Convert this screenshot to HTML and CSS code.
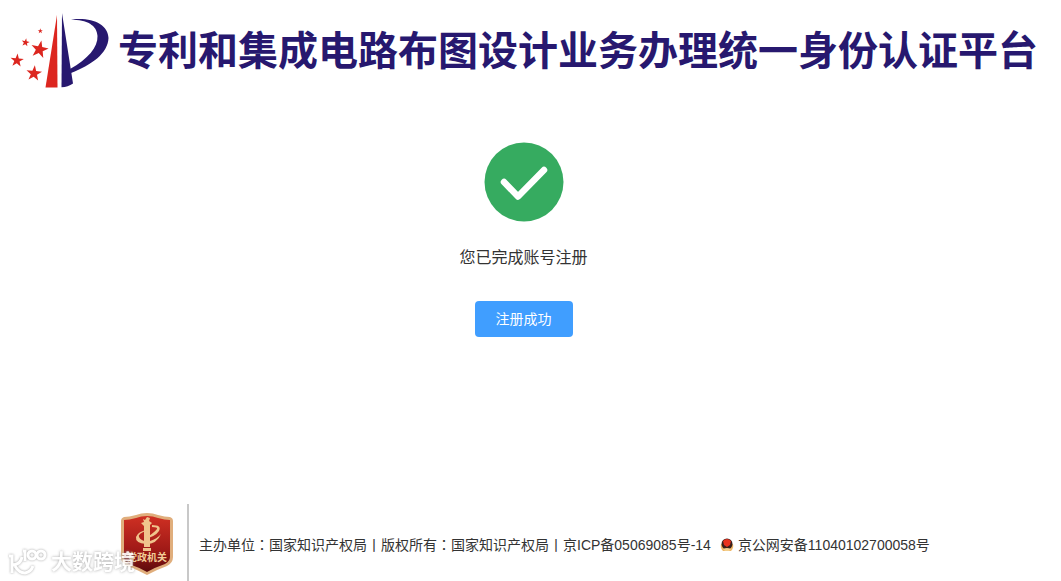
FILE: index.html
```html
<!DOCTYPE html>
<html lang="zh-CN">
<head>
  <meta charset="UTF-8" />
  <meta name="viewport" content="width=device-width, initial-scale=1" />
  <title>专利和集成电路布图设计业务办理统一身份认证平台</title>
  <link rel="stylesheet" href="styles.css">
</head>
<body>
  <header class="header">
    <svg class="logo" viewBox="0 0 100 76" aria-hidden="true">
      <defs>
        <path id="star" d="M0-10 2.3-3.2 9.5-3.1 3.8 1.2 5.9 8.1 0 4-5.9 8.1-3.8 1.2-9.5-3.1-2.3-3.2Z" />
      </defs>
      <g fill="#dc261f">
        <use href="#star" transform="translate(29.500 37.500) rotate(12) scale(.92)" />
        <use href="#star" transform="translate(7 48.500) rotate(5) scale(.7)" />
        <use href="#star" transform="translate(24 61.500) rotate(6) scale(.82)" />
        <use href="#star" transform="translate(15.500 30.500) rotate(10) scale(.42)" />
        <use href="#star" transform="translate(30.300 19) scale(.27)" />
        <path d="M47 3 47.500 75.500H35.500Z" />
      </g>
      <g fill="#27186f">
        <path d="M52 1 63 71.500Q58 75 51.500 75.300Z" />
        <path d="M61 7.500C82 5 98 12 98.500 26 98 41 82 53 61 61L60 57C78 47 88 35 87.500 24 87 13 77 8 61 7.500Z" />
      </g>
    </svg>
    <h1 class="title">专利和集成电路布图设计业务办理统一身份认证平台</h1>
  </header>

  <main class="result">
    <svg class="result-icon" viewBox="0 0 80 80" aria-hidden="true">
      <circle cx="40" cy="40" r="39.500" fill="#36ab60" />
      <path d="M20 40 34 54.500 60 28" fill="none" stroke="#fff" stroke-width="6.500" stroke-linecap="round" stroke-linejoin="round" />
    </svg>
    <p class="result-text">您已完成账号注册</p>
    <button type="button" class="btn">注册成功</button>
  </main>

  <footer class="footer">
    <svg class="badge" viewBox="0 0 54 64" role="img" aria-label="党政机关">
      <defs>
        <linearGradient id="shield" x1="0" y1="0" x2="0" y2="1">
          <stop offset="0" stop-color="#cf3023" />
          <stop offset=".6" stop-color="#a01a17" />
          <stop offset="1" stop-color="#5c0b0c" />
        </linearGradient>
      </defs>
      <path d="M27 1Q33 1 38 3 45 5 50 5 53 6 53 9V45Q53 51 47 54 36 58 27 63 18 58 7 54 1 51 1 45V9Q1 6 4 5 9 5 16 3 21 1 27 1Z" fill="#e0ae7c" />
      <path d="M27 4Q33 4 38 6 45 8 50 8V45Q50 49 45 52 36 55 27 60 18 55 9 52 4 49 4 45V8Q9 8 16 6 21 4 27 4Z" fill="url(#shield)" />
      <g fill="#f0c48c">
        <path d="M23 7 25 8 27 5 30 6 29 9 32 11 30 13V35H24V14L21 11 24 10Z" />
        <path d="M23 36H31V39H23Z" />
        <path d="M32 13Q42 13 39 19 35 25 24 27 34 21 37 17 38 15 32 15Z" />
        <path d="M28 18Q17 22 19 25 21 30 30 29 37 27 41 22 37 32 26 32 15 31 16 25 18 19 28 18Z" />
      </g>
      <text class="badge-text" x="27" y="49" text-anchor="middle">党政机关</text>
    </svg>
    <div class="footer-info">
      <span>主办单位<span class="colon" lang="zh-TW">：</span>国家知识产权局丨版权所有<span class="colon" lang="zh-TW">：</span>国家知识产权局丨京ICP备05069085号-14</span>
      <svg class="police" viewBox="0 0 14 14" aria-hidden="true">
        <path d="M1 6Q0 10 3 13H11Q14 10 13 6Z" fill="#eeb565" />
        <circle cx="7" cy="6" r="5.500" fill="#38201c" />
        <path d="M3 3Q7-1 11 3L10 7 7 9 4 7Z" fill="#e8321f" />
        <path d="M3 11Q7 9 11 11L9 13H5Z" fill="#f3cf8d" />
      </svg>
      <span>京公网安备11040102700058号</span>
    </div>
  </footer>

  <div class="watermark">
    <svg class="watermark-logo" viewBox="0 0 40 30" aria-hidden="true">
      <path d="M1 9H4V26M14 10Q13 17 5 18M7 19Q11 26 17 26 23 25 25 19" />
      <path d="M15 4H17V14" />
      <circle cx="24" cy="8" r="4" />
      <circle cx="33" cy="8" r="4" />
    </svg>
    <span>大数跨境</span>
  </div>
</body>
</html>
```

FILE: styles.css
```css
* {
  box-sizing: border-box;
  margin: 0;
  padding: 0;
}

body {
  min-height: 100vh;
  display: flex;
  flex-direction: column;
  background: #fff;
  color: #333;
  font-family: "Liberation Sans", "Noto Sans CJK SC", sans-serif;
  font-size: 14px;
}

.header {
  display: flex;
  align-items: center;
  gap: 8px;
  padding: 12px 10px 0;
}

.logo {
  width: 100px;
  height: 76px;
  flex: none;
}

.title {
  padding-top: 2px;
  color: #27186f;
  font-size: 40px;
  line-height: 60px;
  font-weight: 700;
  white-space: nowrap;
}

.result {
  flex: 1;
  display: flex;
  flex-direction: column;
  align-items: center;
  padding: 54px 14px 0 0;
}

.result-icon {
  width: 80px;
  height: 80px;
}

.result-text {
  margin: 24px 0 31px;
  font-size: 16px;
  line-height: 24px;
}

.btn {
  padding: 8px 21px;
  border: none;
  border-radius: 4px;
  background: #409eff;
  color: #fff;
  font: inherit;
  line-height: 20px;
  cursor: pointer;
}

.footer {
  display: flex;
  padding-left: 120px;
}

.badge {
  width: 54px;
  height: 64px;
  margin: 8px 13px 5px 0;
}

.badge-text {
  fill: #f3cd98;
  font-size: 10px;
  font-weight: 700;
}

.footer-info {
  display: flex;
  align-items: center;
  padding: 4px 0 0 10px;
  border-left: 2px solid #c8c8c8;
  line-height: 20px;
  white-space: nowrap;
}

/* centred full-width colon */
.colon {
  font-family: "Noto Sans CJK TC", sans-serif;
}

.police {
  width: 14px;
  height: 14px;
  margin: 0 4px 0 9px;
}

.watermark {
  position: fixed;
  left: 8px;
  bottom: 4px;
  display: flex;
  align-items: center;
  gap: 3px;
  color: #fff;
  font-size: 21px;
  font-weight: 700;
  line-height: 30px;
  text-shadow: 0 0 3px #999;
  opacity: 0.9;
}

.watermark-logo {
  width: 40px;
  height: 30px;
  fill: none;
  stroke: #fff;
  stroke-width: 3;
  filter: drop-shadow(0 0 1px #999);
}
```
